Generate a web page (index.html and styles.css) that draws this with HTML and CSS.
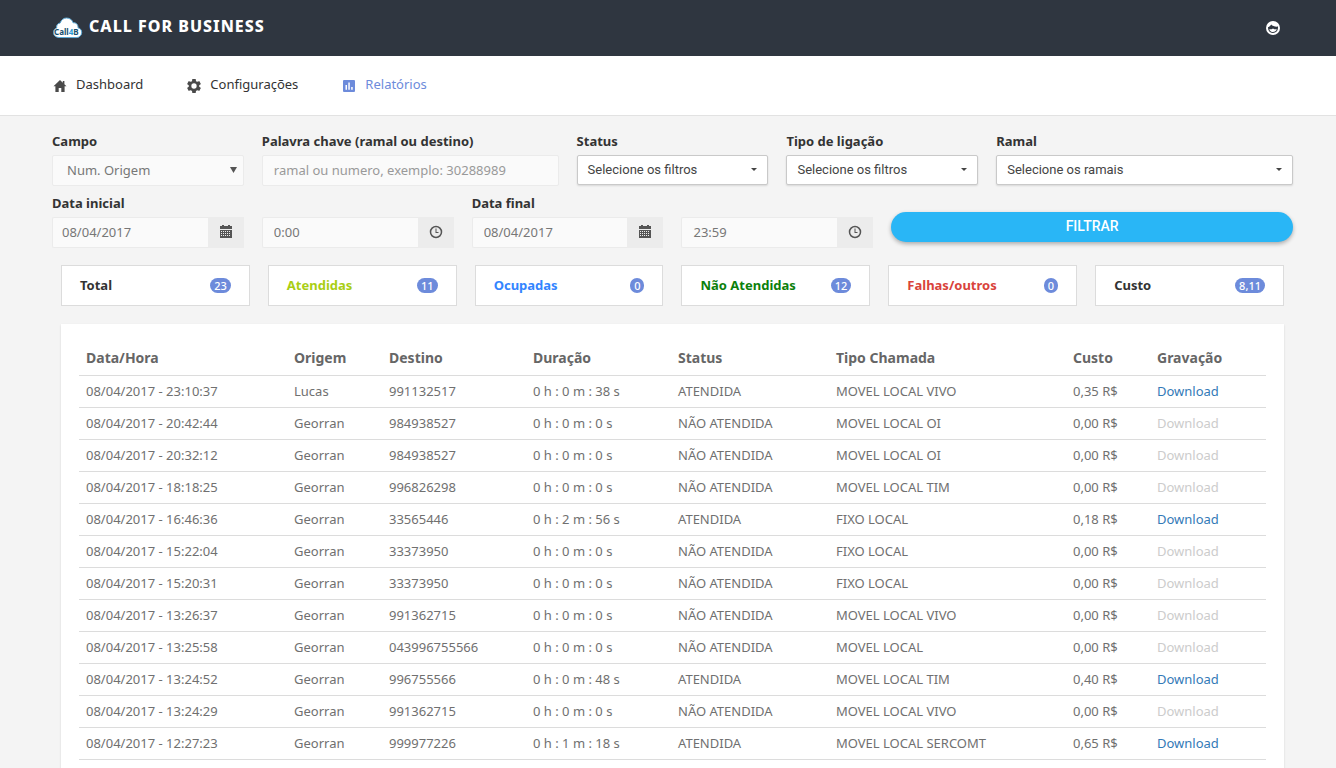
FILE: index.html
```html
<!DOCTYPE html>
<html lang="pt-BR">
<head>
    <meta charset="UTF-8">
    <meta name="viewport" content="width=device-width, initial-scale=1.0">
    <title>Call for Business</title>
    <link rel="stylesheet" href="styles.css">
</head>
<body>

    <header class="topbar">
        <a class="brand" href="#">
            <svg class="logo" viewBox="0 0 31 22" aria-hidden="true">
                <path d="M7 20.500C3.500 20.300 1.500 18.300 1.500 15.500C1.500 13 3 11.400 4.700 11C4.100 8.300 5.900 6.200 8.200 6C9.200 2.800 11.700 1 14.500 1C17.900 1 20.300 3 21.100 5.800C23.800 5.400 26.300 7.300 26 10.800C28.300 11.400 29.700 13 29.700 15.400C29.700 18.300 27.500 20.400 24.500 20.600Z" fill="#fff" stroke="#5aa9d6" stroke-width="1"/>
                <text x="2" y="18" class="logo-text">Call<tspan class="logo-four">4</tspan>B</text>
            </svg>
            <span>CALL FOR BUSINESS</span>
        </a>
        <button class="user" aria-label="Usuário">
            <svg viewBox="0 0 14 14" width="14" height="14">
                <circle cx="7" cy="7" r="7" fill="#fff"/>
                <path d="M2 6.200C3.600 5.700 4.600 4.800 5.200 3.600C6.600 5.200 9 5.900 12 5.600C12.300 9.600 10 12 7 12C4 12 1.900 9.600 2 6.200Z" fill="#2f3640"/>
                <path d="M3.200 8.300H5.700L7 7.600L8.300 8.300H10.800C10.200 10.300 8.700 11 7 11C5.300 11 3.800 10.300 3.200 8.300Z" fill="#fff"/>
            </svg>
        </button>
    </header>

    <nav class="menu">
        <a href="#">
            <svg viewBox="0 0 14 14" width="14" height="14"><path d="M7 1L0.500 7.200H2.400V13H5.700V9H8.300V13H11.600V7.200H13.500L11.400 5.200V2H9.800V3.700Z"/></svg>
            Dashboard
        </a>
        <a href="#">
            <svg viewBox="2 2 20 20" width="14" height="14"><path d="M19.430 12.980c.04-.32.070-.64.070-.98s-.03-.66-.07-.98l2.110-1.650c.19-.15.240-.42.120-.64l-2-3.460c-.12-.22-.39-.3-.61-.22l-2.490 1c-.52-.4-1.080-.73-1.690-.98l-.38-2.650C14.460 2.180 14.250 2 14 2h-4c-.25 0-.46.18-.49.420l-.38 2.650c-.61.250-1.170.590-1.690.980l-2.490-1c-.23-.09-.49 0-.61.220l-2 3.460c-.13.220-.07.490.120.640l2.110 1.650c-.04.320-.07.650-.07.980s.03.660.070.980l-2.110 1.650c-.19.150-.24.420-.12.640l2 3.460c.12.220.39.300.61.220l2.490-1c.52.400 1.080.730 1.690.980l.38 2.650c.03.240.24.420.49.420h4c.25 0 .46-.18.490-.42l.38-2.650c.61-.25 1.170-.59 1.690-.98l2.490 1c.23.090.49 0 .61-.22l2-3.460c.12-.22.070-.49-.12-.64l-2.110-1.650zM12 15.800a3.800 3.800 0 1 1 0-7.600 3.800 3.800 0 0 1 0 7.600z"/></svg>
            Configurações
        </a>
        <a href="#" class="active">
            <svg viewBox="0 0 14 14" width="14" height="14"><path fill-rule="evenodd" d="M2 1H12A1 1 0 0 1 13 2V12A1 1 0 0 1 12 13H2A1 1 0 0 1 1 12V2A1 1 0 0 1 2 1ZM3.500 6V10.800H5V6ZM6.300 3.500V10.800H7.800V3.500ZM9.200 8V10.800H10.700V8Z"/></svg>
            Relatórios
        </a>
    </nav>

    <main>
        <form class="filters">
            <div class="field">
                <label for="campo">Campo</label>
                <div class="select">
                    <select id="campo" class="input">
                        <option>Num. Origem</option>
                    </select>
                    <svg viewBox="0 0 7 6" width="7" height="6"><path d="M0 0H7L3.500 6Z"/></svg>
                </div>
            </div>
            <div class="field wide">
                <label for="palavra">Palavra chave (ramal ou destino)</label>
                <input type="text" id="palavra" class="input" placeholder="ramal ou numero, exemplo: 30288989">
            </div>
            <div class="field">
                <label for="status">Status</label>
                <button type="button" id="status" class="dropdown">Selecione os filtros <span class="caret"></span></button>
            </div>
            <div class="field">
                <label for="tipo">Tipo de ligação</label>
                <button type="button" id="tipo" class="dropdown">Selecione os filtros <span class="caret"></span></button>
            </div>
            <div class="field wide">
                <label for="ramal">Ramal</label>
                <button type="button" id="ramal" class="dropdown">Selecione os ramais <span class="caret"></span></button>
            </div>

            <div class="field">
                <label for="data-inicial">Data inicial</label>
                <div class="input-group">
                    <input type="text" id="data-inicial" class="input date" value="08/04/2017">
                    <span class="addon"><svg viewBox="0 0 14 14" width="14" height="14"><path fill-rule="evenodd" d="M1 1H3V0H5V1H9V0H11V1H13V4H1ZM1 5H13V13H1ZM2 6V7H3V6ZM4 6V7H5V6ZM6 6V7H7V6ZM8 6V7H9V6ZM10 6V7H11V6ZM2 8V9H3V8ZM4 8V9H5V8ZM6 8V9H7V8ZM8 8V9H9V8ZM10 8V9H11V8ZM2 10V11H3V10ZM4 10V11H5V10ZM6 10V11H7V10ZM8 10V11H9V10ZM10 10V11H11V10Z"/></svg></span>
                </div>
            </div>
            <div class="field">
                <div class="input-group">
                    <input type="text" class="input" aria-label="Hora inicial" value="0:00">
                    <span class="addon"><svg viewBox="0 0 14 14" width="14" height="14"><circle cx="7" cy="7" r="5.500" fill="none" stroke="#555" stroke-width="1.500"/><path d="M6.500 3.500V8H9.500V7H7.500V3.500Z"/></svg></span>
                </div>
            </div>
            <div class="field">
                <label for="data-final">Data final</label>
                <div class="input-group">
                    <input type="text" id="data-final" class="input" value="08/04/2017">
                    <span class="addon"><svg viewBox="0 0 14 14" width="14" height="14"><path fill-rule="evenodd" d="M1 1H3V0H5V1H9V0H11V1H13V4H1ZM1 5H13V13H1ZM2 6V7H3V6ZM4 6V7H5V6ZM6 6V7H7V6ZM8 6V7H9V6ZM10 6V7H11V6ZM2 8V9H3V8ZM4 8V9H5V8ZM6 8V9H7V8ZM8 8V9H9V8ZM10 8V9H11V8ZM2 10V11H3V10ZM4 10V11H5V10ZM6 10V11H7V10ZM8 10V11H9V10ZM10 10V11H11V10Z"/></svg></span>
                </div>
            </div>
            <div class="field">
                <div class="input-group">
                    <input type="text" class="input" aria-label="Hora final" value="23:59">
                    <span class="addon"><svg viewBox="0 0 14 14" width="14" height="14"><circle cx="7" cy="7" r="5.500" fill="none" stroke="#555" stroke-width="1.500"/><path d="M6.500 3.500V8H9.500V7H7.500V3.500Z"/></svg></span>
                </div>
            </div>
            <div class="field submit">
                <button type="submit" class="filtrar">FILTRAR</button>
            </div>
        </form>

        <section class="totals">
            <div class="total">Total <span class="badge">23</span></div>
            <div class="total answered">Atendidas <span class="badge">11</span></div>
            <div class="total busy">Ocupadas <span class="badge">0</span></div>
            <div class="total missed">Não Atendidas <span class="badge">12</span></div>
            <div class="total failed">Falhas/outros <span class="badge">0</span></div>
            <div class="total">Custo <span class="badge">8,11</span></div>
        </section>

        <section class="card">
            <table>
                <thead>
                    <tr>
                        <th class="c-data">Data/Hora</th>
                        <th class="c-origem">Origem</th>
                        <th class="c-destino">Destino</th>
                        <th class="c-duracao">Duração</th>
                        <th class="c-status">Status</th>
                        <th class="c-tipo">Tipo Chamada</th>
                        <th class="c-custo">Custo</th>
                        <th class="c-gravacao">Gravação</th>
                    </tr>
                </thead>
                <tbody>
                    <tr><td>08/04/2017 - 23:10:37</td><td>Lucas</td><td>991132517</td><td>0 h : 0 m : 38 s</td><td>ATENDIDA</td><td>MOVEL LOCAL VIVO</td><td>0,35 R$</td><td><a href="#">Download</a></td></tr>
                    <tr><td>08/04/2017 - 20:42:44</td><td>Georran</td><td>984938527</td><td>0 h : 0 m : 0 s</td><td>NÃO ATENDIDA</td><td>MOVEL LOCAL OI</td><td>0,00 R$</td><td><a href="#" class="disabled">Download</a></td></tr>
                    <tr><td>08/04/2017 - 20:32:12</td><td>Georran</td><td>984938527</td><td>0 h : 0 m : 0 s</td><td>NÃO ATENDIDA</td><td>MOVEL LOCAL OI</td><td>0,00 R$</td><td><a href="#" class="disabled">Download</a></td></tr>
                    <tr><td>08/04/2017 - 18:18:25</td><td>Georran</td><td>996826298</td><td>0 h : 0 m : 0 s</td><td>NÃO ATENDIDA</td><td>MOVEL LOCAL TIM</td><td>0,00 R$</td><td><a href="#" class="disabled">Download</a></td></tr>
                    <tr><td>08/04/2017 - 16:46:36</td><td>Georran</td><td>33565446</td><td>0 h : 2 m : 56 s</td><td>ATENDIDA</td><td>FIXO LOCAL</td><td>0,18 R$</td><td><a href="#">Download</a></td></tr>
                    <tr><td>08/04/2017 - 15:22:04</td><td>Georran</td><td>33373950</td><td>0 h : 0 m : 0 s</td><td>NÃO ATENDIDA</td><td>FIXO LOCAL</td><td>0,00 R$</td><td><a href="#" class="disabled">Download</a></td></tr>
                    <tr><td>08/04/2017 - 15:20:31</td><td>Georran</td><td>33373950</td><td>0 h : 0 m : 0 s</td><td>NÃO ATENDIDA</td><td>FIXO LOCAL</td><td>0,00 R$</td><td><a href="#" class="disabled">Download</a></td></tr>
                    <tr><td>08/04/2017 - 13:26:37</td><td>Georran</td><td>991362715</td><td>0 h : 0 m : 0 s</td><td>NÃO ATENDIDA</td><td>MOVEL LOCAL VIVO</td><td>0,00 R$</td><td><a href="#" class="disabled">Download</a></td></tr>
                    <tr><td>08/04/2017 - 13:25:58</td><td>Georran</td><td>043996755566</td><td>0 h : 0 m : 0 s</td><td>NÃO ATENDIDA</td><td>MOVEL LOCAL</td><td>0,00 R$</td><td><a href="#" class="disabled">Download</a></td></tr>
                    <tr><td>08/04/2017 - 13:24:52</td><td>Georran</td><td>996755566</td><td>0 h : 0 m : 48 s</td><td>ATENDIDA</td><td>MOVEL LOCAL TIM</td><td>0,40 R$</td><td><a href="#">Download</a></td></tr>
                    <tr><td>08/04/2017 - 13:24:29</td><td>Georran</td><td>991362715</td><td>0 h : 0 m : 0 s</td><td>NÃO ATENDIDA</td><td>MOVEL LOCAL VIVO</td><td>0,00 R$</td><td><a href="#" class="disabled">Download</a></td></tr>
                    <tr><td>08/04/2017 - 12:27:23</td><td>Georran</td><td>999977226</td><td>0 h : 1 m : 18 s</td><td>ATENDIDA</td><td>MOVEL LOCAL SERCOMT</td><td>0,65 R$</td><td><a href="#">Download</a></td></tr>
                </tbody>
            </table>
        </section>
    </main>

</body>
</html>
```
FILE: styles.css
```css
* {
    box-sizing: border-box;
}
body {
    margin: 0;
    background-color: #f4f4f4;
    color: #707070;
    font-family: 'Noto Sans', sans-serif;
    font-size: 13px;
    line-height: 18px;
}
a {
    color: #337ab7;
    text-decoration: none;
}
button {
    font-family: Roboto, sans-serif;
    cursor: pointer;
}
.topbar {
    display: flex;
    justify-content: space-between;
    align-items: center;
    height: 56px;
    padding: 0 56px 0 52px;
    background-color: #2f3640;
}
.brand {
    display: flex;
    align-items: center;
    gap: 6px;
    color: #fff;
    font-size: 16px;
    font-weight: 800;
    letter-spacing: 1px;
    padding-bottom: 4px;
}
.logo {
    width: 31px;
    height: 22px;
    margin-top: 4px;
}
.logo-text {
    font-size: 8px;
    font-weight: bold;
    letter-spacing: 0;
    fill: #17506f;
}
.logo-four {
    fill: #2a9ad6;
}
.user {
    display: flex;
    padding: 0;
    border: none;
    background: none;
}
.menu {
    display: flex;
    gap: 44px;
    height: 60px;
    padding: 0 53px;
    align-items: center;
    background-color: #fff;
    border-bottom: 1px solid #e2e2e2;
}
.menu a {
    display: flex;
    align-items: center;
    gap: 9px;
    color: #333;
    padding-bottom: 4px;
}
.menu svg {
    fill: #4a4a4a;
    margin-top: 4px;
}
.menu .active {
    color: #6d8bdb;
}
.menu .active svg {
    fill: #6d8bdb;
}
main {
    padding: 16px 43px 0 52px;
}
.filters {
    display: grid;
    grid-template-columns: repeat(12, 1fr);
    gap: 8px 18px;
}
.field {
    grid-column: span 2;
    display: flex;
    flex-direction: column;
    justify-content: flex-end;
    min-width: 0;
}
.field.wide {
    grid-column: span 3;
}
.field.submit {
    grid-column: span 4;
    padding-bottom: 6px;
}
label {
    margin-bottom: 5px;
    color: #333;
    font-weight: bold;
}
.input {
    width: 100%;
    height: 31px;
    padding: 0 11px 2px;
    border: 1px solid #ebebeb;
    border-radius: 2px;
    background-color: #fafafa;
    color: #777;
    font-family: inherit;
    font-size: 13px;
}
.input::placeholder {
    color: #999;
}
.input.date {
    padding: 0 9px 2px;
}
.select {
    position: relative;
    display: flex;
}
.select select {
    appearance: none;
    padding: 0 14px 2px;
}
.select svg {
    position: absolute;
    top: 12px;
    right: 7px;
    fill: #555;
    pointer-events: none;
}
.input-group {
    display: flex;
}
.input-group .input {
    flex: 1;
    min-width: 0;
    border-right: none;
    border-radius: 2px 0 0 2px;
}
.addon {
    display: flex;
    align-items: center;
    justify-content: center;
    width: 36px;
    padding-bottom: 2px;
    background-color: #ececec;
}
.addon svg {
    fill: #555;
}
.dropdown {
    display: flex;
    justify-content: space-between;
    align-items: center;
    height: 30px;
    margin-bottom: 1px;
    padding: 0 10px 2px;
    border: 1px solid #c9c9c9;
    border-radius: 2px;
    background-color: #fff;
    box-shadow: 0 1px 2px rgba(0, 0, 0, 0.12);
    color: #444;
    font-size: 13px;
}
.caret {
    border-top: 3px solid #444;
    border-left: 3px solid transparent;
    border-right: 3px solid transparent;
}
.filtrar {
    height: 30px;
    padding-bottom: 3px;
    border: none;
    border-radius: 15px;
    background-color: #29b6f6;
    box-shadow: 0 2px 4px rgba(0, 0, 0, 0.3);
    color: #fff;
    font-size: 14px;
    font-weight: 500;
}
.totals {
    display: grid;
    grid-template-columns: repeat(6, 1fr);
    gap: 18px;
    margin: 17px 9px 18px;
}
.total {
    display: flex;
    justify-content: space-between;
    align-items: center;
    height: 41px;
    padding: 0 18px 1px;
    border: 1px solid #dcdcdc;
    background-color: #fff;
    color: #333;
    font-weight: bold;
}
.answered {
    color: #a9ce14;
}
.busy {
    color: #3385ff;
}
.missed {
    color: #0b800b;
}
.failed {
    color: #d9433b;
}
.badge {
    padding: 0 4px;
    border-radius: 8px;
    background-color: #6d8bdb;
    color: #fff;
    font-size: 11px;
    font-weight: 500;
    line-height: 15px;
}
.card {
    margin: 0 9px;
    padding: 18px;
    background-color: #fff;
    box-shadow: 0 1px 2px rgba(0, 0, 0, 0.12);
}
table {
    width: 100%;
    border-collapse: collapse;
    table-layout: fixed;
}
th, td {
    padding: 6px 7px 7px;
    border-bottom: 1px solid #dcdcdc;
    text-align: left;
    white-space: nowrap;
}
th {
    padding: 7px 7px 8px;
    color: #666;
    font-size: 14px;
}
.c-data {
    width: 208px;
}
.c-origem {
    width: 95px;
}
.c-destino {
    width: 144px;
}
.c-duracao {
    width: 145px;
}
.c-status {
    width: 158px;
}
.c-tipo {
    width: 237px;
}
.c-custo {
    width: 84px;
}
.c-gravacao {
    width: 116px;
}
.disabled {
    color: #ccc;
}
```
